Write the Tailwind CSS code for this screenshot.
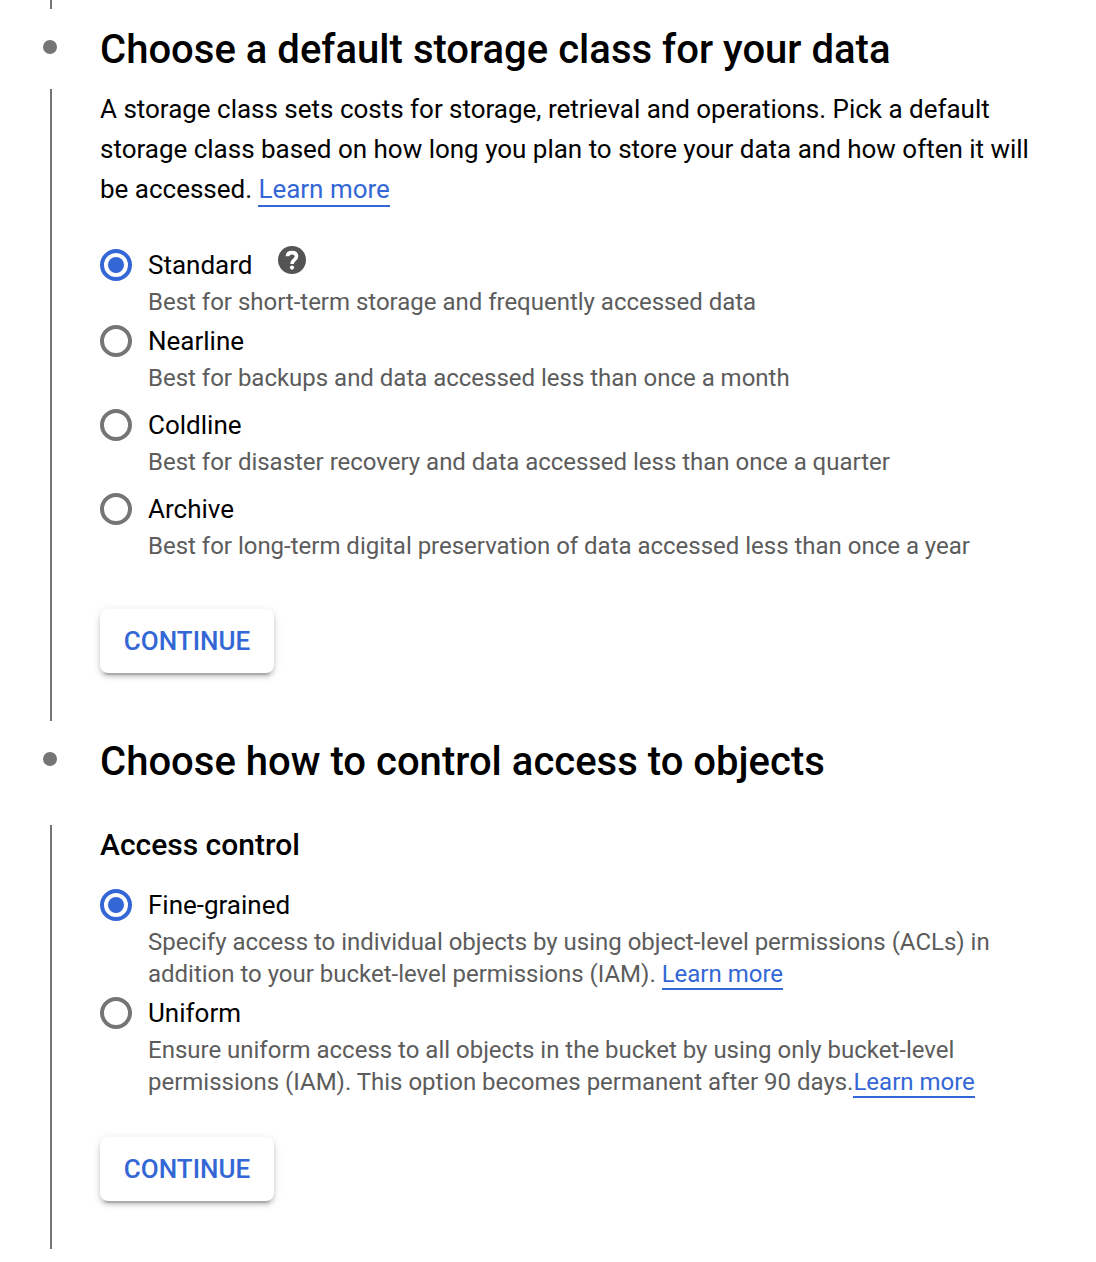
<!DOCTYPE html>
<html lang="en"><head><meta charset="utf-8"><title>Create a bucket</title>
<script src="https://cdn.jsdelivr.net/npm/@tailwindcss/browser@4"></script></head>
<body class="bg-white font-['Roboto',sans-serif] text-black">
<main class="flex h-[1262px] w-[1096px] flex-col overflow-hidden">
<div class="ml-[50px] h-[9px] w-[2px] shrink-0 bg-[#757575]"></div>
<section class="flex h-[712px] shrink-0">
<div class="flex w-[100px] shrink-0 flex-col pt-[31px]">
<div class="ml-[43px] size-[14px] shrink-0 rounded-full bg-[#757575]"></div>
<div class="mt-[35px] ml-[50px] h-[632px] w-[2px] shrink-0 bg-[#757575]"></div>
</div>
<div class="flex flex-col items-start pt-[17px]">
<h2 class="text-[40px] leading-[48px] font-medium tracking-[0.02px] whitespace-nowrap">Choose a default storage class for your data</h2>
<p class="mt-[15px] text-[26px] leading-[40px] tracking-[-0.012px] whitespace-nowrap">A storage class sets costs for storage, retrieval and operations. Pick a default<br>storage class based on how long you plan to store your data and how often it will<br>be accessed. <a class="border-b-2 border-[#3367d6] pb-px text-[#3367d6]">Learn more</a></p>
<div class="mt-[36px] flex flex-col">
<div class="flex h-[76px] gap-4"><svg class="mt-1 size-8 shrink-0" viewBox="0 0 32 32"><circle cx="16" cy="16" r="14" fill="none" stroke="#3367d6" stroke-width="4"/><circle cx="16" cy="16" r="8" fill="#3367d6"/></svg><div><div class="flex text-[26px] leading-[40px]">Standard<svg class="mt-[1px] ml-[26px] size-7" viewBox="0 0 28 28"><circle cx="14" cy="14" r="14" fill="#545454"/><path d="M9.500 10.300C9.500 7.900 11.100 6.600 14 6.600S18.500 8.200 18.500 10.500C18.500 13.700 14 13.500 14 18" fill="none" stroke="#fff" stroke-width="3.600"/><circle cx="14" cy="21.600" r="2.100" fill="#fff"/></svg></div><div class="pt-px text-2xl leading-8 tracking-[-0.012px] whitespace-nowrap text-[#5c5c5c]">Best for short-term storage and frequently accessed data</div></div></div>
<div class="flex h-[84px] gap-4"><svg class="mt-1 size-8 shrink-0" viewBox="0 0 32 32"><circle cx="16" cy="16" r="14" fill="none" stroke="#757575" stroke-width="4"/></svg><div><div class="text-[26px] leading-[40px]">Nearline</div><div class="pt-px text-2xl leading-8 tracking-[-0.012px] whitespace-nowrap text-[#5c5c5c]">Best for backups and data accessed less than once a month</div></div></div>
<div class="flex h-[84px] gap-4"><svg class="mt-1 size-8 shrink-0" viewBox="0 0 32 32"><circle cx="16" cy="16" r="14" fill="none" stroke="#757575" stroke-width="4"/></svg><div><div class="text-[26px] leading-[40px]">Coldline</div><div class="pt-px text-2xl leading-8 tracking-[-0.012px] whitespace-nowrap text-[#5c5c5c]">Best for disaster recovery and data accessed less than once a quarter</div></div></div>
<div class="flex h-[84px] gap-4"><svg class="mt-1 size-8 shrink-0" viewBox="0 0 32 32"><circle cx="16" cy="16" r="14" fill="none" stroke="#757575" stroke-width="4"/></svg><div><div class="text-[26px] leading-[40px]">Archive</div><div class="pt-px text-2xl leading-8 tracking-[-0.012px] whitespace-nowrap text-[#5c5c5c]">Best for long-term digital preservation of data accessed less than once a year</div></div></div>
</div>
<button class="mt-[36px] h-16 w-[174px] rounded-lg bg-white text-[26px] leading-[64px] font-medium text-[#3367d6] shadow-[0_6px_2px_-4px_rgba(0,0,0,0.2),0_4px_4px_rgba(0,0,0,0.14),0_2px_10px_rgba(0,0,0,0.12)]">CONTINUE</button>
</div>
</section>
<section class="flex h-[541px] shrink-0">
<div class="flex w-[100px] shrink-0 flex-col pt-[31px]">
<div class="ml-[43px] size-[14px] shrink-0 rounded-full bg-[#757575]"></div>
<div class="mt-[59px] ml-[50px] h-[424px] w-[2px] shrink-0 bg-[#757575]"></div>
</div>
<div class="flex flex-col items-start pt-[17px]">
<h2 class="text-[40px] leading-[48px] font-medium tracking-[0.02px] whitespace-nowrap">Choose how to control access to objects</h2>
<h3 class="mt-[39px] text-[30px] leading-[40px] font-medium">Access control</h3>
<div class="mt-5 flex flex-col">
<div class="flex h-[108px] gap-4"><svg class="mt-1 size-8 shrink-0" viewBox="0 0 32 32"><circle cx="16" cy="16" r="14" fill="none" stroke="#3367d6" stroke-width="4"/><circle cx="16" cy="16" r="8" fill="#3367d6"/></svg><div><div class="text-[26px] leading-[40px] tracking-[-0.012px]">Fine-grained</div><div class="pt-px text-2xl leading-8 tracking-[-0.009px] whitespace-nowrap text-[#5c5c5c]">Specify access to individual objects by using object-level permissions (ACLs) in<br>addition to your bucket-level permissions (IAM). <a class="border-b-2 border-[#3367d6] text-[#3367d6]">Learn more</a></div></div></div>
<div class="flex h-[108px] gap-4"><svg class="mt-1 size-8 shrink-0" viewBox="0 0 32 32"><circle cx="16" cy="16" r="14" fill="none" stroke="#757575" stroke-width="4"/></svg><div><div class="text-[26px] leading-[40px]">Uniform</div><div class="pt-px text-2xl leading-8 tracking-[-0.006px] whitespace-nowrap text-[#5c5c5c]">Ensure uniform access to all objects in the bucket by using only bucket-level<br>permissions (IAM). This option becomes permanent after 90 days.<a class="border-b-2 border-[#3367d6] text-[#3367d6]">Learn more</a></div></div></div>
</div>
<button class="mt-[36px] h-16 w-[174px] rounded-lg bg-white text-[26px] leading-[64px] font-medium text-[#3367d6] shadow-[0_6px_2px_-4px_rgba(0,0,0,0.2),0_4px_4px_rgba(0,0,0,0.14),0_2px_10px_rgba(0,0,0,0.12)]">CONTINUE</button>
</div>
</section>
</main></body></html>
